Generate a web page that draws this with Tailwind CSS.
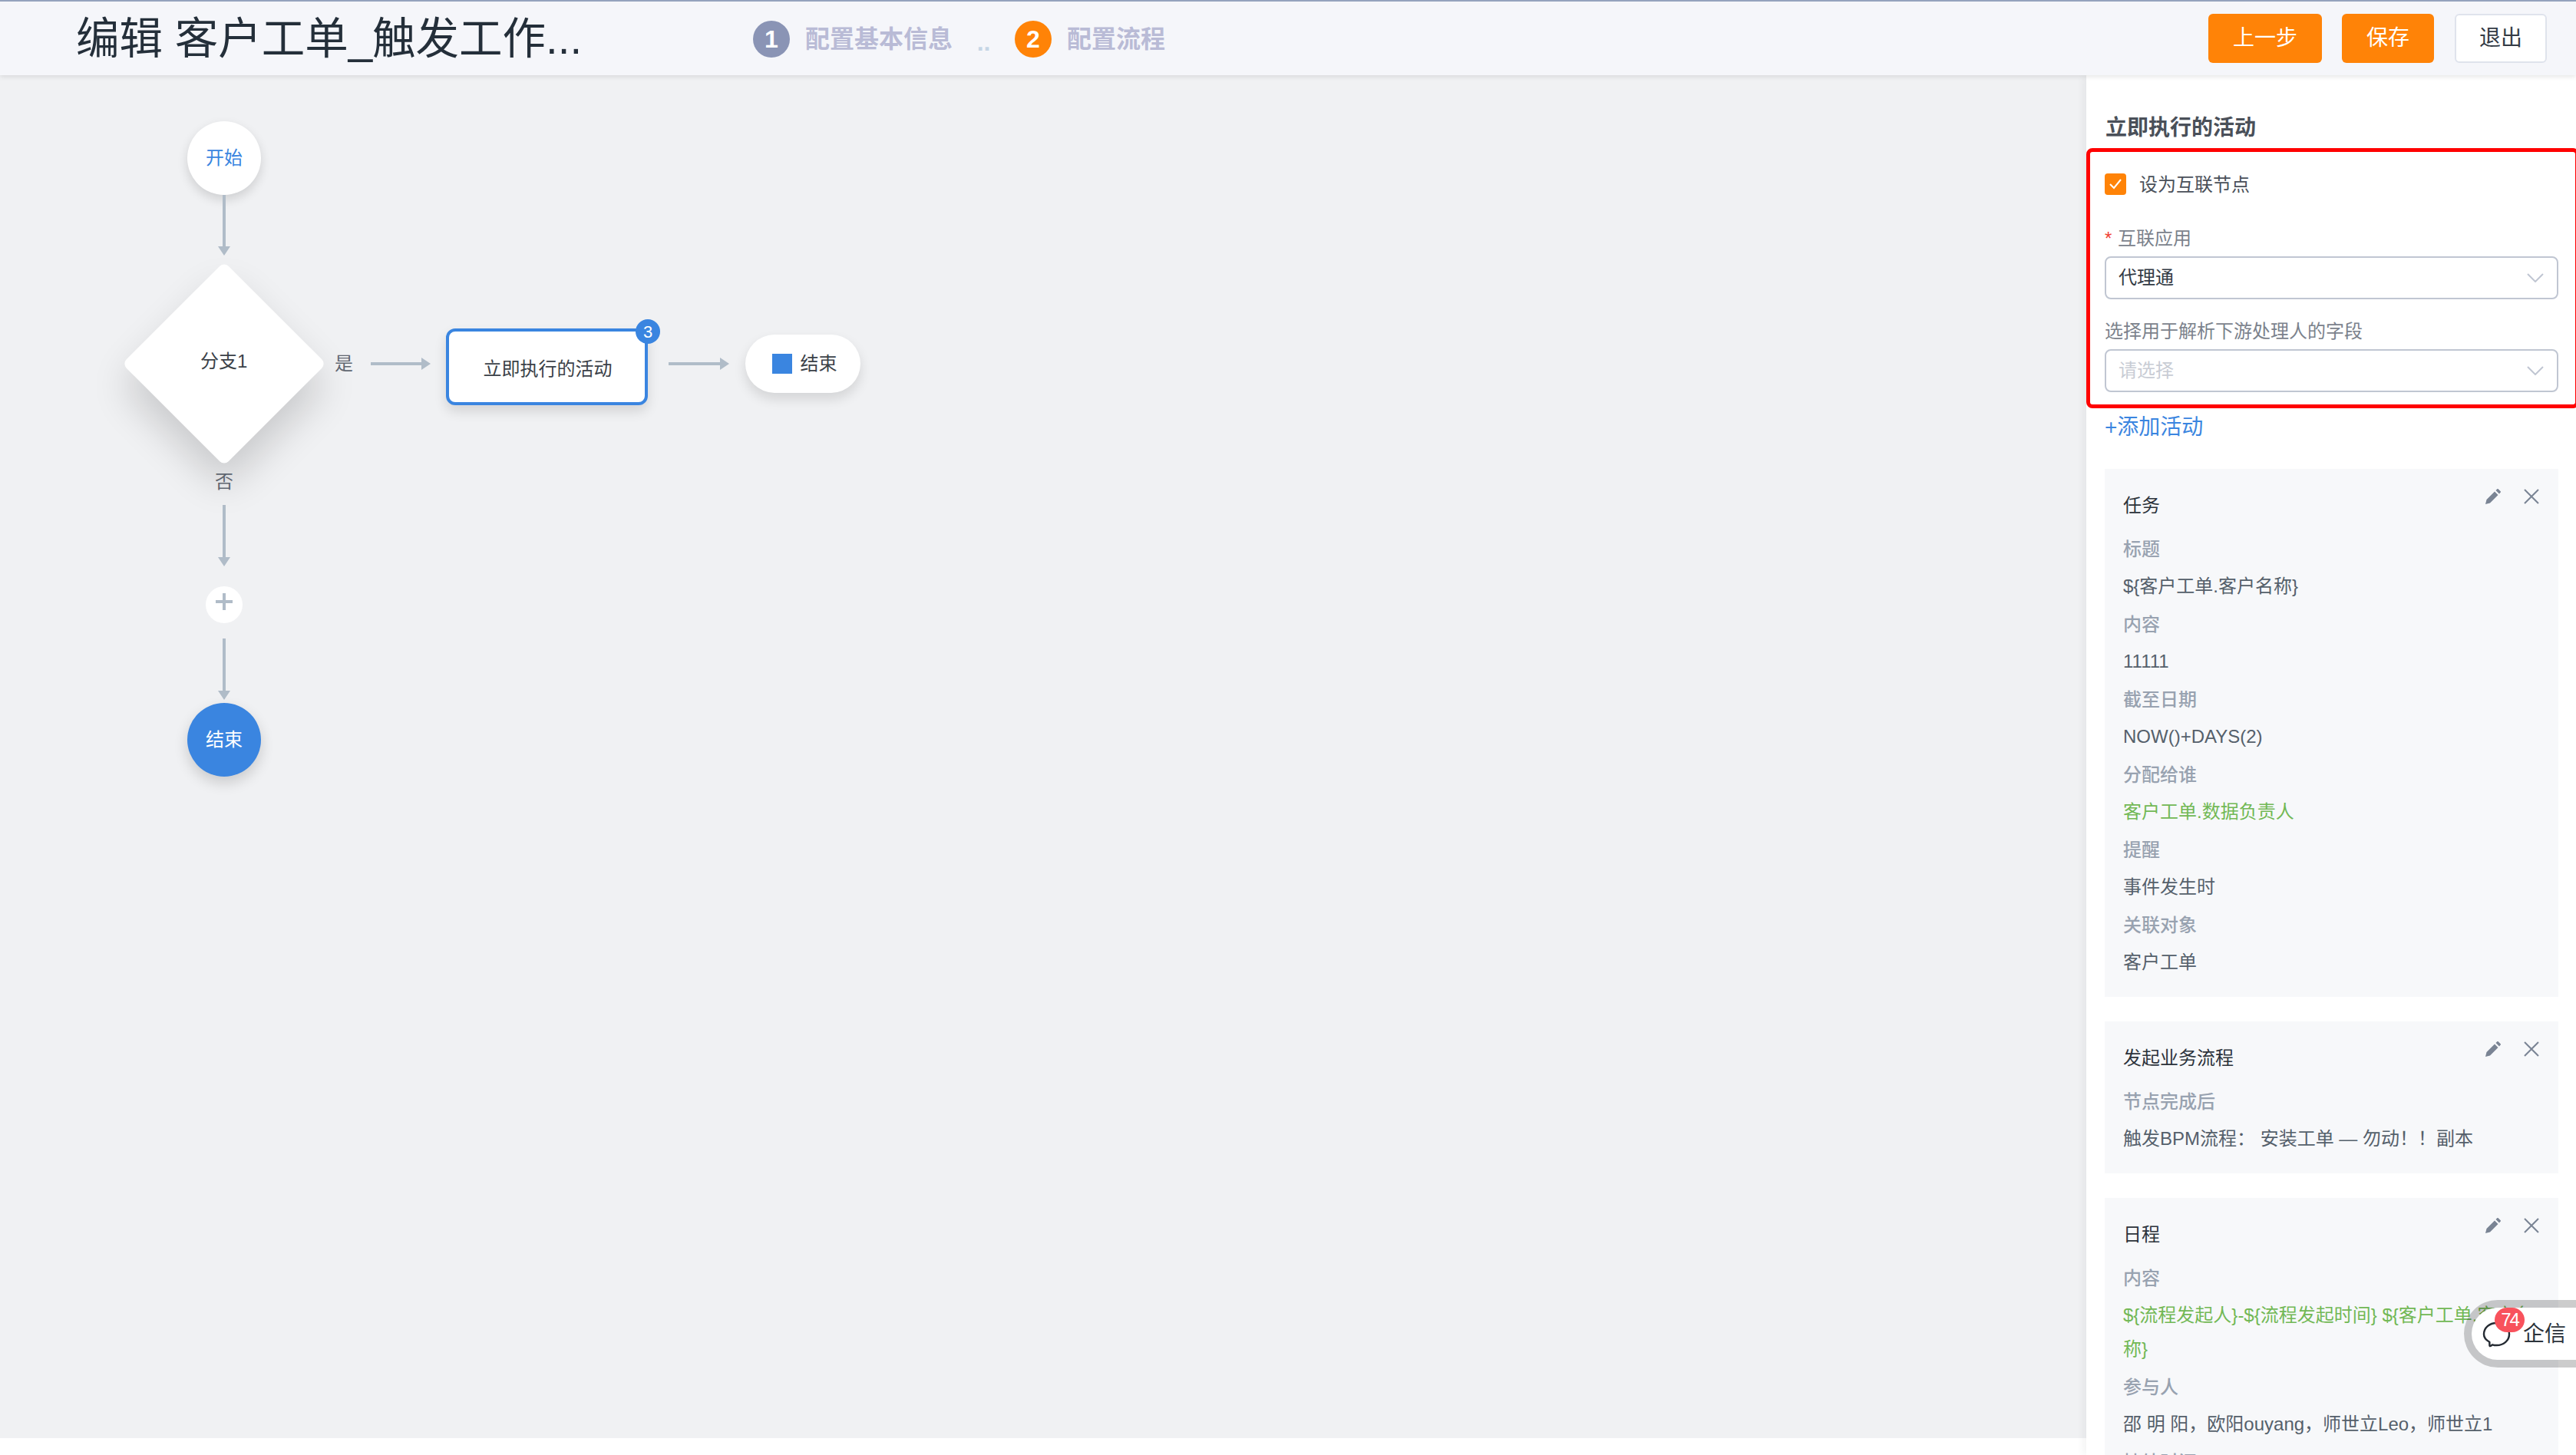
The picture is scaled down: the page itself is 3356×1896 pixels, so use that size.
<!DOCTYPE html>
<html lang="zh">
<head>
    <meta charset="UTF-8">
    <title>编辑 客户工单_触发工作流</title>
    <script src="https://cdn.jsdelivr.net/npm/@tailwindcss/browser@4"></script>
</head>
<body class="bg-white font-['Liberation_Sans','Noto_Sans_CJK_SC',sans-serif]">
<div class="relative w-[3356px] h-[1896px] overflow-hidden flex flex-col">

    <!-- top bar -->
    <header class="relative z-10 shrink-0 h-[98px] border-t-2 border-[#94a3bd] bg-[#f5f6fa] shadow-[0_2px_6px_rgba(0,0,0,0.1)] flex items-center pl-[99px] pr-[38px]">
        <h1 class="w-[882px] mt-[2px] text-[56.5px] leading-[70px] text-[#242f3a] whitespace-nowrap">编辑 客户工单_触发工作...</h1>
        <div class="flex items-center mt-[2px]">
            <span class="w-12 h-12 rounded-full bg-[#8a94b5] text-white text-[32px] font-bold flex items-center justify-center">1</span>
            <span class="ml-5 text-[32px] font-bold text-[#b9bbd6]">配置基本信息</span>
            <span class="w-[81px] text-center text-[32px] font-bold text-[#c5d5e5] leading-none pt-2">..</span>
            <span class="w-12 h-12 rounded-full bg-[#ff8307] text-white text-[32px] font-bold flex items-center justify-center">2</span>
            <span class="ml-5 text-[32px] font-bold text-[#b9bbd6]">配置流程</span>
        </div>
        <div class="ml-auto flex items-center">
            <button class="w-[148px] h-16 rounded-md bg-[#ff8307] text-white text-[28px]">上一步</button>
            <button class="ml-[26px] w-[120px] h-16 rounded-md bg-[#ff8307] text-white text-[28px]">保存</button>
            <button class="ml-[27px] w-[120px] h-16 rounded-md bg-white border-2 border-[#dfe3ec] text-[#333b45] text-[28px]">退出</button>
        </div>
    </header>

    <div class="flex flex-1 min-h-0">
        <!-- flow canvas -->
        <main class="relative w-[2718px] h-[1776px] shrink-0 bg-[#f0f1f3] text-[24px]">
            <div class="absolute left-[244px] top-[60px] w-24 h-24 rounded-full bg-white shadow-[0_6px_14px_rgba(0,0,0,0.14)] flex items-center justify-center text-[#3a85e0]">开始</div>
            <svg class="absolute left-[284px] top-[156px]" width="16" height="79" viewBox="0 0 16 79"><path d="M6 0h4v67h6l-8 12-8-12h6z" fill="#b0bcc8"/></svg>

            <div class="absolute left-[198px] top-[282px] w-[188px] h-[188px] rounded-lg rotate-45 bg-white shadow-[20px_20px_50px_rgba(0,0,0,0.16)] flex items-center justify-center">
                <span class="-rotate-45 -mt-1 -ml-1 text-[#3b4148] whitespace-nowrap">分支1</span>
            </div>
            <span class="absolute left-[436px] top-[359px] leading-[34px] text-[#5f6670]">是</span>
            <svg class="absolute left-[483px] top-[368px]" width="78" height="16" viewBox="0 0 78 16"><path d="M0 6h66V0l12 8-12 8v-6H0z" fill="#b0bcc8"/></svg>

            <div class="absolute left-[581px] top-[330px] w-[263px] h-[100px] rounded-xl border-4 border-[#3a85e0] bg-white shadow-[0_8px_16px_rgba(0,0,0,0.12)] flex items-center justify-center pt-1.5 pl-0.5 text-[#3b4148]">立即执行的活动</div>
            <span class="absolute left-[828px] top-[318px] w-8 h-8 rounded-full bg-[#3a85e0] text-white text-[22px] flex items-center justify-center">3</span>
            <svg class="absolute left-[871px] top-[368px]" width="79" height="16" viewBox="0 0 79 16"><path d="M0 6h67V0l12 8-12 8v-6H0z" fill="#b0bcc8"/></svg>

            <div class="absolute left-[971px] top-[338px] w-[150px] h-[76px] rounded-[38px] bg-white shadow-[0_8px_16px_rgba(0,0,0,0.12)] flex items-center justify-center pl-1 text-[#3b4148]">
                <span class="w-[26px] h-[26px] bg-[#3a85e0] mr-[11px]"></span>结束
            </div>

            <span class="absolute left-[280px] top-[513px] leading-[34px] text-[#5f6670]">否</span>
            <svg class="absolute left-[284px] top-[560px]" width="16" height="80" viewBox="0 0 16 80"><path d="M6 0h4v68h6l-8 12-8-12h6z" fill="#b0bcc8"/></svg>
            <div class="absolute left-[268px] top-[666px] w-12 h-12 rounded-full bg-white flex items-center justify-center">
                <svg width="22" height="22" viewBox="0 0 22 22" class="-mt-2"><path d="M9 0h4v9h9v4h-9v9H9v-9H0V9h9z" fill="#b0bcc8"/></svg>
            </div>
            <svg class="absolute left-[284px] top-[734px]" width="16" height="80" viewBox="0 0 16 80"><path d="M6 0h4v68h6l-8 12-8-12h6z" fill="#b0bcc8"/></svg>
            <div class="absolute left-[244px] top-[818px] w-24 h-24 rounded-full bg-[#3a85e0] shadow-[0_8px_18px_rgba(0,0,0,0.16)] flex items-center justify-center text-white">结束</div>
        </main>

        <!-- right settings panel -->
        <aside class="relative z-[1] w-[638px] shrink-0 h-[1798px] overflow-hidden bg-white shadow-[-4px_0_10px_rgba(0,0,0,0.05)]">
            <h2 class="mt-[49px] ml-[25px] text-[28px] leading-[40px] font-bold text-[#4a5059]">立即执行的活动</h2>

            <section class="mt-1.5 w-[642px] border-[5px] border-[#ff0000] rounded-lg pl-[19px] pt-[28px] pb-4 text-[24px]">
                <label class="flex items-center h-7">
                    <span class="w-7 h-7 rounded-[4px] bg-[#ff8307] flex items-center justify-center">
                        <svg width="18" height="16" viewBox="0 0 18 16"><path d="M2 8l5 5 9-11" fill="none" stroke="#fff" stroke-width="2"/></svg>
                    </span>
                    <span class="ml-[17px] pt-[1px] text-[#4a5059]">设为互联节点</span>
                </label>
                <div class="mt-10 leading-[34px] text-[#7b828c]"><span class="text-[#f04134] inline-block w-[17px]">*</span>互联应用</div>
                <div class="mt-1.5 w-[591px] h-[56px] rounded-lg border-2 border-[#c0c6d2] flex items-center justify-between pl-4 pr-[17px] text-[#333b45]">
                    代理通
                    <svg width="22" height="12" viewBox="0 0 22 12"><path d="M1 1l10 10L21 1" fill="none" stroke="#c0c6d2" stroke-width="2"/></svg>
                </div>
                <div class="mt-[25px] leading-[34px] text-[#7b828c]">选择用于解析下游处理人的字段</div>
                <div class="mt-1.5 w-[591px] h-[56px] rounded-lg border-2 border-[#c0c6d2] flex items-center justify-between pl-4 pr-[17px] text-[#c8ccd4]">
                    请选择
                    <svg width="22" height="12" viewBox="0 0 22 12"><path d="M1 1l10 10L21 1" fill="none" stroke="#c0c6d2" stroke-width="2"/></svg>
                </div>
            </section>

            <a href="#" class="block mt-[5px] ml-6 text-[28px] leading-[40px] text-[#3a85e0]">+添加活动</a>

            <div class="mt-[34px] ml-6 w-[591px] flex flex-col gap-8 text-[24px]">
                <!-- 任务 -->
                <article class="relative bg-[#f7f8fa] pl-6 pr-[26px] pt-7 pb-5">
                    <div class="absolute right-[25px] top-[26px] flex items-center gap-[30px]">
                        <svg width="20" height="20" viewBox="0 0 20 20"><path d="M0 20l1.500-6L12 3.500l4.500 4.500L6 18.500zM13.500 2l1.800-1.800a1 1 0 0 1 1.400 0l3 3a1 1 0 0 1 0 1.400L18 6.500z" fill="#7a8494"/></svg>
                        <svg width="20" height="20" viewBox="0 0 20 20"><path d="M1 1l18 18M19 1L1 19" stroke="#7a8494" stroke-width="2"/></svg>
                    </div>
                    <h3 class="leading-[40px] text-[#2c333b]">任务</h3>
                    <dl class="mt-3">
                        <dt class="leading-[49px] font-medium text-[#98a2b0]">标题</dt>
                        <dd class="leading-[44px] pt-[1.5px] pb-[3.5px] text-[#55606b]">${客户工单.客户名称}</dd>
                        <dt class="leading-[49px] font-medium text-[#98a2b0]">内容</dt>
                        <dd class="leading-[44px] pt-[1.5px] pb-[3.5px] text-[#55606b]">11111</dd>
                        <dt class="leading-[49px] font-medium text-[#98a2b0]">截至日期</dt>
                        <dd class="leading-[44px] pt-[1.5px] pb-[3.5px] text-[#55606b]">NOW()+DAYS(2)</dd>
                        <dt class="leading-[49px] font-medium text-[#98a2b0]">分配给谁</dt>
                        <dd class="leading-[44px] pt-[1.5px] pb-[3.5px] text-[#72b855]">客户工单.数据负责人</dd>
                        <dt class="leading-[49px] font-medium text-[#98a2b0]">提醒</dt>
                        <dd class="leading-[44px] pt-[1.5px] pb-[3.5px] text-[#55606b]">事件发生时</dd>
                        <dt class="leading-[49px] font-medium text-[#98a2b0]">关联对象</dt>
                        <dd class="leading-[44px] pt-[1.5px] pb-[3.5px] text-[#55606b]">客户工单</dd>
                    </dl>
                </article>

                <!-- 发起业务流程 -->
                <article class="relative bg-[#f7f8fa] pl-6 pr-[26px] pt-7 pb-5">
                    <div class="absolute right-[25px] top-[26px] flex items-center gap-[30px]">
                        <svg width="20" height="20" viewBox="0 0 20 20"><path d="M0 20l1.500-6L12 3.500l4.500 4.500L6 18.500zM13.500 2l1.800-1.800a1 1 0 0 1 1.400 0l3 3a1 1 0 0 1 0 1.400L18 6.500z" fill="#7a8494"/></svg>
                        <svg width="20" height="20" viewBox="0 0 20 20"><path d="M1 1l18 18M19 1L1 19" stroke="#7a8494" stroke-width="2"/></svg>
                    </div>
                    <h3 class="leading-[40px] text-[#2c333b]">发起业务流程</h3>
                    <dl class="mt-3">
                        <dt class="leading-[49px] font-medium text-[#98a2b0]">节点完成后</dt>
                        <dd class="leading-[44px] pt-[1.5px] pb-[3.5px] text-[#55606b]">触发BPM流程： 安装工单 — 勿动！！副本</dd>
                    </dl>
                </article>

                <!-- 日程 -->
                <article class="relative bg-[#f7f8fa] pl-6 pr-[26px] pt-7 pb-5">
                    <div class="absolute right-[25px] top-[26px] flex items-center gap-[30px]">
                        <svg width="20" height="20" viewBox="0 0 20 20"><path d="M0 20l1.500-6L12 3.500l4.500 4.500L6 18.500zM13.500 2l1.800-1.800a1 1 0 0 1 1.400 0l3 3a1 1 0 0 1 0 1.400L18 6.500z" fill="#7a8494"/></svg>
                        <svg width="20" height="20" viewBox="0 0 20 20"><path d="M1 1l18 18M19 1L1 19" stroke="#7a8494" stroke-width="2"/></svg>
                    </div>
                    <h3 class="leading-[40px] text-[#2c333b]">日程</h3>
                    <dl class="mt-3">
                        <dt class="leading-[49px] font-medium text-[#98a2b0]">内容</dt>
                        <dd class="leading-[44px] pt-[1.5px] pb-[3.5px] text-[#72b855]">${流程发起人}-${流程发起时间} ${客户工单.客户名称}</dd>
                        <dt class="leading-[49px] font-medium text-[#98a2b0]">参与人</dt>
                        <dd class="leading-[44px] pt-[1.5px] pb-[3.5px] text-[#55606b]">邵 明 阳，欧阳ouyang，师世立Leo，师世立1</dd>
                        <dt class="leading-[49px] font-medium text-[#98a2b0]">持续时间</dt>
                    </dl>
                </article>
            </div>
        </aside>
    </div>

    <!-- floating chat widget -->
    <div class="absolute z-20 left-[3210px] top-[1694px] w-[190px] h-[88px] rounded-[44px] border-[10px] border-black/20 bg-white bg-clip-padding flex items-center pl-[14px]">
        <svg width="37" height="35" viewBox="0 0 38 36"><path d="M10 34c-1-.5 0-4-.5-5.500C5 26 2 22 2 18 2 9.500 9.500 3 19 3s17 6.500 17 15-7.500 15-17 15c-2 0-4-.3-5.500-.8C12 33 11 34.500 10 34z" fill="none" stroke="#252b33" stroke-width="2.500"/></svg>
        <span class="ml-4 pt-[2px] text-[28px] text-[#2c333b] whitespace-nowrap">企信</span>
        <span class="absolute left-[30px] top-0 w-[39px] h-8 rounded-full bg-[#f8525c] text-white text-[24px] tracking-[-2px] flex items-center justify-center">74</span>
    </div>
</div>
</body>
</html>
